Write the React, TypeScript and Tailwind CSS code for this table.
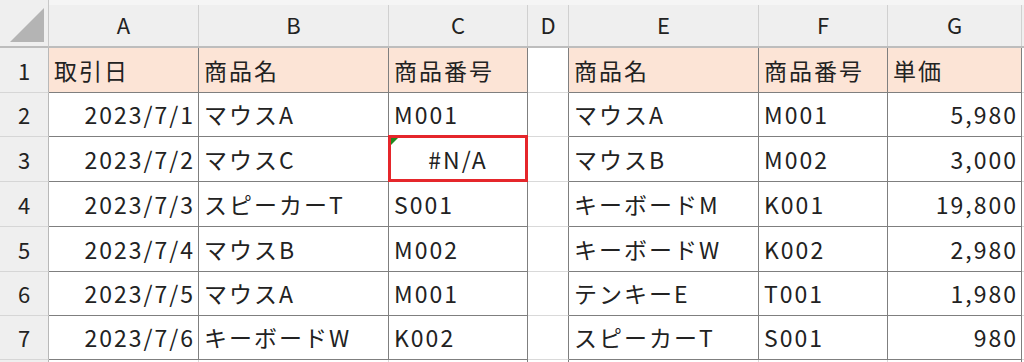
import React from "react";

type Align = "l" | "r" | "c";
type Cell = { t: string; a: Align };

const FONT = { fontFamily: '"Noto Sans CJK JP", "Noto Sans", sans-serif' };

const header: string[] = ["取引日", "商品名", "商品番号", "", "商品名", "商品番号", "単価"];

const rows: Cell[][] = [
  [
    { t: "2023/7/1", a: "r" },
    { t: "マウスA", a: "l" },
    { t: "M001", a: "l" },
    { t: "", a: "l" },
    { t: "マウスA", a: "l" },
    { t: "M001", a: "l" },
    { t: "5,980", a: "r" },
  ],
  [
    { t: "2023/7/2", a: "r" },
    { t: "マウスC", a: "l" },
    { t: "#N/A", a: "c" },
    { t: "", a: "l" },
    { t: "マウスB", a: "l" },
    { t: "M002", a: "l" },
    { t: "3,000", a: "r" },
  ],
  [
    { t: "2023/7/3", a: "r" },
    { t: "スピーカーT", a: "l" },
    { t: "S001", a: "l" },
    { t: "", a: "l" },
    { t: "キーボードM", a: "l" },
    { t: "K001", a: "l" },
    { t: "19,800", a: "r" },
  ],
  [
    { t: "2023/7/4", a: "r" },
    { t: "マウスB", a: "l" },
    { t: "M002", a: "l" },
    { t: "", a: "l" },
    { t: "キーボードW", a: "l" },
    { t: "K002", a: "l" },
    { t: "2,980", a: "r" },
  ],
  [
    { t: "2023/7/5", a: "r" },
    { t: "マウスA", a: "l" },
    { t: "M001", a: "l" },
    { t: "", a: "l" },
    { t: "テンキーE", a: "l" },
    { t: "T001", a: "l" },
    { t: "1,980", a: "r" },
  ],
  [
    { t: "2023/7/6", a: "r" },
    { t: "キーボードW", a: "l" },
    { t: "K002", a: "l" },
    { t: "", a: "l" },
    { t: "スピーカーT", a: "l" },
    { t: "S001", a: "l" },
    { t: "980", a: "r" },
  ],
];

const rowHeights = ["h-[45px]", "h-[44px]", "h-[45px]", "h-[45px]", "h-[45px]", "h-[44px]", "h-[44px]"];
const letters = ["A", "B", "C", "D", "E", "F", "G"];

function alignCls(a: Align) {
  if (a === "r") return "justify-end pr-[3px]";
  if (a === "c") return "justify-center";
  return "justify-start pl-[5px]";
}

export default function App() {
  return (
    <div
      className="w-[1024px] h-[362px] overflow-hidden bg-white text-[#222222]"
      style={FONT}
    >
      <div className="grid grid-cols-[49px_150px_190px_139px_41px_190px_129px_134px_1fr]">
        {/* Column header row */}
        <div className="h-[48px] bg-[#efefef] border-b-2 border-[#bdbdbd] border-r border-r-[#c8c8c8] flex items-end justify-end">
          <svg width="40" height="40" viewBox="0 0 40 40" className="mb-[1px] mr-[1px]">
            <polygon points="37,3 37,37 3,37" fill="#b4b4b4" />
          </svg>
        </div>
        {letters.map((l) => (
          <div key={l} className="h-[48px] bg-[#efefef] border-b-2 border-[#bdbdbd] flex flex-col">
            <div className="h-[5px] bg-[#f5f5f5]" />
            <div className="flex-1 border-r border-[#d0d0d0] flex items-center justify-center text-[22px] leading-none pb-[4px]">
              {l}
            </div>
          </div>
        ))}
        <div className="h-[48px] bg-[#efefef] border-b-2 border-[#bdbdbd] flex flex-col">
          <div className="h-[5px] bg-[#f5f5f5]" />
        </div>

        {/* Row 1 (headers) */}
        <div className="h-[45px] bg-[#efefef] border-r border-[#b8b8b8] border-b border-b-[#d6d6d6] flex items-center justify-center text-[22px]">
          1
        </div>
        {header.map((h, i) =>
          i === 3 ? (
            <div key={i} className="h-[45px] bg-white border-r border-[#7f7f7f] border-b border-b-[#d9d9d9]" />
          ) : (
            <div
              key={i}
              className="h-[45px] bg-[#fce4d6] border-r border-b border-[#7f7f7f] flex items-center pl-[5px] text-[23px] tracking-[2px] whitespace-nowrap"
            >
              {h}
            </div>
          )
        )}
        <div className="h-[45px] border-b border-[#d9d9d9]" />

        {/* Data rows */}
        {rows.map((r, ri) => (
          <React.Fragment key={ri}>
            <div
              className={`${rowHeights[ri + 1]} bg-[#efefef] border-r border-[#b8b8b8] border-b border-b-[#d6d6d6] flex items-center justify-center text-[22px]`}
            >
              {ri + 2}
            </div>
            {r.map((c, ci) => {
              if (ci === 3) {
                return (
                  <div
                    key={ci}
                    className={`${rowHeights[ri + 1]} bg-white border-r border-[#7f7f7f] border-b border-b-[#d9d9d9]`}
                  />
                );
              }
              const isErr = c.t === "#N/A";
              return (
                <div
                  key={ci}
                  className={`${rowHeights[ri + 1]} relative bg-white border-r border-b border-[#7f7f7f] flex items-center ${alignCls(
                    c.a
                  )} text-[23px] tracking-[2px] whitespace-nowrap`}
                >
                  {c.t}
                  {isErr && (
                    <>
                      <div className="absolute left-[-1px] top-[-2px] right-[-1px] bottom-[-1px] border-[3px] border-[#e5262b]" />
                      <svg width="7" height="7" viewBox="0 0 7 7" className="absolute left-[2px] top-[1px]">
                        <polygon points="0,0 7,0 0,7" fill="#1f8a1f" />
                      </svg>
                    </>
                  )}
                </div>
              );
            })}
            <div className={`${rowHeights[ri + 1]} border-b border-[#d9d9d9]`} />
          </React.Fragment>
        ))}

        {/* Partial row 8 */}
        <div className="h-[4px] bg-[#efefef] border-r border-[#b8b8b8]" />
        {letters.map((l, i) => (
          <div key={l} className={`h-[4px] border-r ${i === 2 || i === 3 || i === 6 ? "border-[#7f7f7f]" : "border-[#d9d9d9]"}`} />
        ))}
        <div className="h-[4px]" />
      </div>
    </div>
  );
}
